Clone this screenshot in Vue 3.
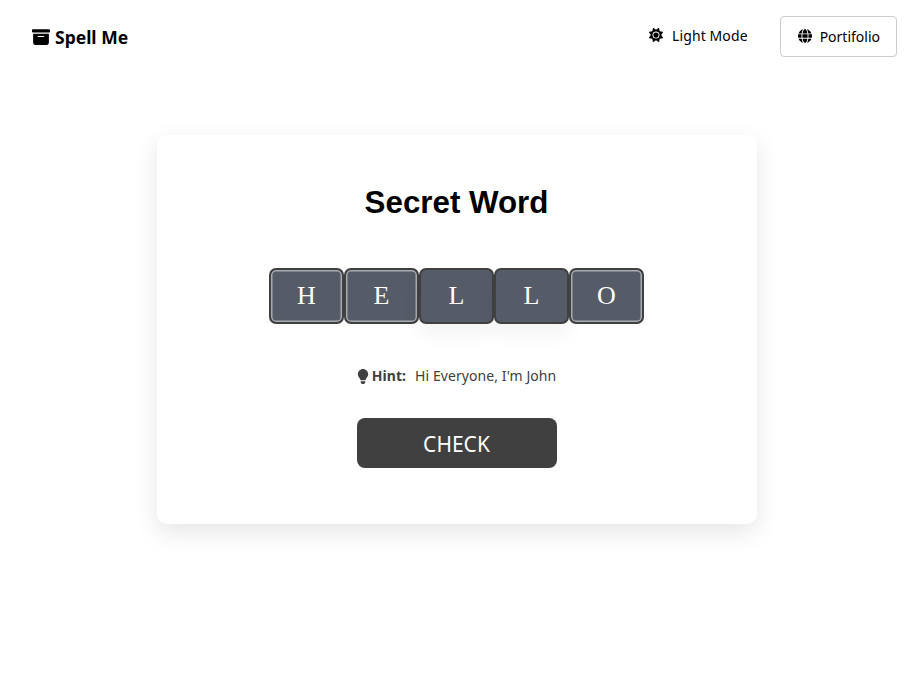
<template>
  <div class="page">
    <nav class="nav">
      <div class="brand">
        <svg class="brand-icon" viewBox="0 0 512 512"><path d="M32 32H480c17.7 0 32 14.3 32 32V96c0 17.7-14.3 32-32 32H32C14.3 128 0 113.7 0 96V64C0 46.3 14.3 32 32 32zm0 128H480V416c0 35.3-28.7 64-64 64H96c-35.3 0-64-28.7-64-64V160zm128 80c0 8.8 7.2 16 16 16H336c8.8 0 16-7.2 16-16s-7.2-16-16-16H176c-8.8 0-16 7.2-16 16z" /></svg>
        <span>Spell Me</span>
      </div>
      <div class="actions">
        <button class="btn mode">
          <svg class="icon" viewBox="0 0 512 512"><path d="M361.5 1.2c5 2.1 8.6 6.6 9.6 11.9L391 121l107.9 19.8c5.3 1 9.8 4.6 11.9 9.6s1.5 10.7-1.6 15.2L446.9 256l62.3 90.3c3.1 4.5 3.7 10.2 1.6 15.2s-6.6 8.6-11.9 9.6L391 391 371.1 498.9c-1 5.3-4.6 9.8-9.6 11.9s-10.7 1.5-15.2-1.6L256 446.9l-90.3 62.3c-4.5 3.1-10.2 3.7-15.2 1.6s-8.6-6.6-9.6-11.9L121 391 13.1 371.1c-5.3-1-9.8-4.6-11.9-9.6s-1.5-10.7 1.6-15.2L65.1 256 2.8 165.7c-3.1-4.5-3.7-10.2-1.6-15.2s6.6-8.6 11.9-9.6L121 121 140.9 13.1c1-5.3 4.6-9.8 9.6-11.9s10.7-1.5 15.2 1.6L256 65.1 346.3 2.8c4.5-3.1 10.2-3.7 15.2-1.6zM160 256a96 96 0 1 1 192 0 96 96 0 1 1 -192 0zm224 0a128 128 0 1 0 -256 0 128 128 0 1 0 256 0z" /></svg>
          Light Mode
        </button>
        <button class="btn outline">
          <svg class="icon" viewBox="0 0 512 512"><path d="M352 256c0 22.2-1.2 43.6-3.3 64H163.3c-2.2-20.4-3.3-41.8-3.3-64s1.2-43.6 3.3-64H348.7c2.2 20.4 3.3 41.8 3.3 64zm28.8-64H503.9c5.3 20.5 8.1 41.9 8.1 64s-2.8 43.5-8.1 64H380.8c2.1-20.6 3.2-42 3.2-64s-1.1-43.4-3.2-64zm112.6-32H376.7c-10-63.9-29.8-117.4-55.3-151.6c78.3 20.7 142 77.5 171.9 151.6zm-149.1 0H167.7c6.1-36.4 15.5-68.6 27-94.7c10.5-23.6 22.2-40.7 33.5-51.5C239.4 3.2 248.7 0 256 0s16.6 3.2 27.8 13.8c11.3 10.8 23 27.9 33.5 51.5c11.6 26 20.9 58.2 27 94.7zm-209 0H18.6C48.6 85.9 112.2 29.1 190.6 8.4C165.1 42.6 145.3 96.1 135.3 160zM8.1 192H131.2c-2.1 20.6-3.2 42-3.2 64s1.1 43.4 3.2 64H8.1C2.8 299.5 0 278.1 0 256s2.8-43.5 8.1-64zM194.7 446.6c-11.6-26-20.9-58.2-27-94.6H344.3c-6.1 36.4-15.5 68.6-27 94.6c-10.5 23.6-22.2 40.7-33.5 51.5C272.6 508.8 263.3 512 256 512s-16.6-3.2-27.8-13.8c-11.3-10.8-23-27.9-33.5-51.5zM135.3 352c10 63.9 29.8 117.4 55.3 151.6C112.2 482.9 48.6 426.1 18.6 352H135.3zm358.1 0c-30 74.1-93.6 130.9-171.9 151.6c25.5-34.2 45.2-87.7 55.3-151.6H493.4z" /></svg>
          Portifolio
        </button>
      </div>
    </nav>

    <main class="card">
      <h1>Secret Word</h1>
      <div class="tiles">
        <div v-for="(t, i) in tiles" :key="i" class="tile" :class="{ lit: t.lit }">{{ t.ch }}</div>
      </div>
      <p class="hint">
        <svg class="bulb" viewBox="0 0 384 512"><path d="M272 384c9.6-31.9 29.5-59.1 49.2-86.2c5.2-7.1 10.4-14.2 15.4-21.4c19.8-28.5 31.4-63 31.4-100.3C368 78.8 289.2 0 192 0S16 78.8 16 176c0 37.3 11.6 71.9 31.4 100.3c5 7.2 10.2 14.3 15.4 21.4c19.8 27.1 39.7 54.4 49.2 86.2H272zM192 512c44.2 0 80-35.8 80-80V416H112v16c0 44.2 35.8 80 80 80z" /></svg>
        <b>Hint:</b>
        <span>Hi Everyone, I'm John</span>
      </p>
      <button class="check">CHECK</button>
    </main>
  </div>
</template>

<script setup>
const tiles = [
  { ch: 'H', lit: true },
  { ch: 'E', lit: true },
  { ch: 'L', lit: false },
  { ch: 'L', lit: false },
  { ch: 'O', lit: true }
]
</script>

<style>
html, body { background: #fff; }
</style>

<style scoped>
.page {
  min-height: 690px;
  font-family: "Noto Sans", "Open Sans", sans-serif;
  color: #000;
  background: #fff;
}
.nav {
  display: flex;
  justify-content: space-between;
  align-items: center;
  height: 76px;
  padding: 0 16px 4px 32px;
  box-sizing: border-box;
}
.brand {
  display: flex;
  align-items: center;
  gap: 5px;
  padding-top: 2px;
  font-size: 17.5px;
  font-weight: 700;
}
.brand-icon { width: 18px; height: 18px; fill: #000; }
.actions { display: flex; align-items: center; gap: 15px; }
.btn {
  display: flex;
  align-items: center;
  gap: 8px;
  height: 41px;
  font: inherit;
  font-size: 14px;
  color: #000;
  background: #fff;
  border: 1px solid transparent;
  border-radius: 4px;
}
.mode { padding: 0 16px 2px; gap: 9px; letter-spacing: 0.1px; }
.outline { padding: 0 16px 0 17px; border-color: #ccc; }
.icon { width: 14px; height: 14px; fill: #000; }
.card {
  width: 600px;
  height: 389px;
  margin: 59px auto 0;
  padding-top: 51px;
  box-sizing: border-box;
  display: flex;
  flex-direction: column;
  align-items: center;
  border-radius: 10px;
  background: #fff;
  box-shadow: 0 8px 24px rgba(0, 0, 0, 0.1);
}
h1 {
  margin: 0;
  font-family: "Liberation Sans", Arial, sans-serif;
  font-size: 31.3px;
  line-height: 34px;
  font-weight: 700;
}
.tiles { display: flex; margin-top: 48px; }
.tile {
  width: 75px;
  height: 56px;
  box-sizing: border-box;
  display: flex;
  align-items: center;
  justify-content: center;
  font-family: "Liberation Serif", "Times New Roman", serif;
  font-size: 26px;
  color: #fff;
  background: #555b67;
  border: 2px solid #404040;
  border-radius: 7px;
  box-shadow: 0 10px 20px rgba(0, 0, 0, 0.05);
}
.tile.lit { box-shadow: inset 0 0 0 1.5px #a8abb2; }
.hint {
  display: flex;
  align-items: center;
  margin: 42px 0 0;
  font-size: 14px;
  line-height: 20px;
  letter-spacing: 0.08px;
  color: #404040;
}
.bulb { width: 12px; height: 15px; fill: #404040; margin-right: 3px; }
.hint b { margin-right: 9px; }
.check {
  width: 200px;
  height: 50px;
  margin-top: 32px;
  padding-top: 2px;
  font: inherit;
  font-size: 21px;
  color: #fff;
  background: #404040;
  border: 0;
  border-radius: 8px;
}
</style>
